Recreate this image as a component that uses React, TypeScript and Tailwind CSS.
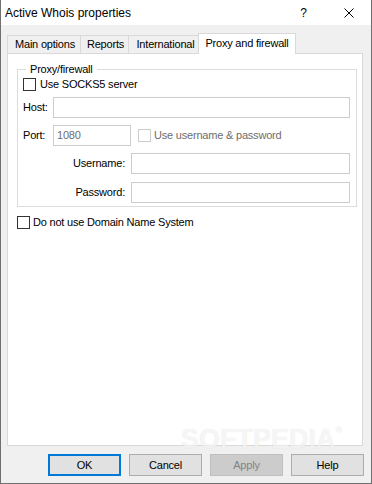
import React from 'react';

const TABS = [
  { label: 'Main options', w: 'w-[73px]' },
  { label: 'Reports', w: 'w-[48px]' },
  { label: 'International', w: 'w-[72px]' },
];

function Check({ disabled = false }: { disabled?: boolean }) {
  return (
    <span
      className={
        disabled
          ? 'w-[13px] h-[13px] shrink-0 border border-[#cccccc] bg-white'
          : 'w-[13px] h-[13px] shrink-0 border border-[#333333] bg-white'
      }
    />
  );
}

function Field({ value = '', className = '' }: { value?: string; className?: string }) {
  return (
    <div className={'h-[21px] border border-[#cccccc] bg-white pl-[3px] flex items-center text-[#6d6d6d] ' + className}>
      {value}
    </div>
  );
}

export default function App() {
  return (
    <div className="relative w-[372px] h-[484px] flex flex-col bg-[#f0f0f0] border-x border-b border-[#707070] text-[11px] tracking-[-0.2px] text-black font-['Liberation_Sans',Arial,sans-serif] overflow-hidden">
      {/* title bar */}
      <div className="h-[25px] shrink-0 bg-white flex items-center pl-[4px] text-[12px] tracking-normal">
        <span>Active Whois properties</span>
        <span className="ml-auto mr-[37px]">?</span>
        <svg width="10" height="10" viewBox="0 0 10 10" className="mr-[17px]">
          <path d="M0.5 0.5 L9.5 9.5 M9.5 0.5 L0.5 9.5" stroke="#000" strokeWidth="1" />
        </svg>
      </div>

      {/* tabs + panel */}
      <div className="pt-[8px] pl-[6px] pr-[8px] flex flex-col">
        <div className="h-[20px] flex items-end">
          {TABS.map(t => (
            <div
              key={t.label}
              className={t.w + ' h-[18px] border-t border-l border-[#d9d9d9] bg-[#f0f0f0] flex items-center justify-center pl-[2px]'}
            >
              {t.label}
            </div>
          ))}
          <div className="relative z-10 -ml-[2px] -mb-[1px] w-[98px] h-[21px] border-t border-x border-[#d9d9d9] bg-white flex items-center justify-center pb-[2px]">
            Proxy and firewall
          </div>
        </div>

        <div className="h-[393px] border border-[#d9d9d9] bg-white flex flex-col">
          <fieldset className="mt-[8px] ml-[9px] mr-[5px] p-0 border border-[#dcdcdc] min-w-0">
            <legend className="ml-[8px] px-[4px] leading-[14px]">Proxy/firewall</legend>
            <div className="pl-[5px] pr-[6px] pb-[3px] flex flex-col">
              <div className="h-[16px] flex items-center gap-[4px]">
                <Check />
                <span>Use SOCKS5 server</span>
              </div>
              <div className="mt-[5px] flex items-center">
                <span className="w-[30px]">Host:</span>
                <Field className="flex-1" />
              </div>
              <div className="mt-[7px] flex items-center">
                <span className="w-[30px]">Port:</span>
                <Field value="1080" className="w-[78px]" />
                <div className="ml-[7px] flex items-center gap-[3px] text-[#6d6d6d]">
                  <Check disabled />
                  <span>Use username &amp; password</span>
                </div>
              </div>
              <div className="mt-[7px] flex items-center">
                <span className="w-[108px] pr-[6px] text-right">Username:</span>
                <Field className="flex-1" />
              </div>
              <div className="mt-[8px] flex items-center">
                <span className="w-[108px] pr-[6px] text-right">Password:</span>
                <Field className="flex-1" />
              </div>
            </div>
          </fieldset>

          <div className="mt-[7px] ml-[9px] h-[16px] flex items-center gap-[3px]">
            <Check />
            <span>Do not use Domain Name System</span>
          </div>
        </div>
      </div>

      {/* buttons */}
      <div className="mt-[8px] pr-[7px] flex justify-end gap-[8px]">
        <button className="w-[73px] h-[22px] border-2 border-[#0078d7] bg-[#e1e1e1]">OK</button>
        <button className="w-[73px] h-[22px] border border-[#adadad] bg-[#e1e1e1]">Cancel</button>
        <button className="w-[73px] h-[22px] border border-[#bfbfbf] bg-[#cccccc] text-[#838383]">Apply</button>
        <button className="w-[73px] h-[22px] border border-[#adadad] bg-[#e1e1e1]">Help</button>
      </div>

      {/* watermark */}
      <div className="absolute left-[180px] top-[424px] text-[27px] leading-[30px] font-bold tracking-normal text-white/70 [text-shadow:0_0_1px_rgba(0,0,0,0.12)] pointer-events-none select-none">
        SOFTPEDIA<span className="align-top text-[9px] leading-[12px]">®</span>
      </div>
    </div>
  );
}
